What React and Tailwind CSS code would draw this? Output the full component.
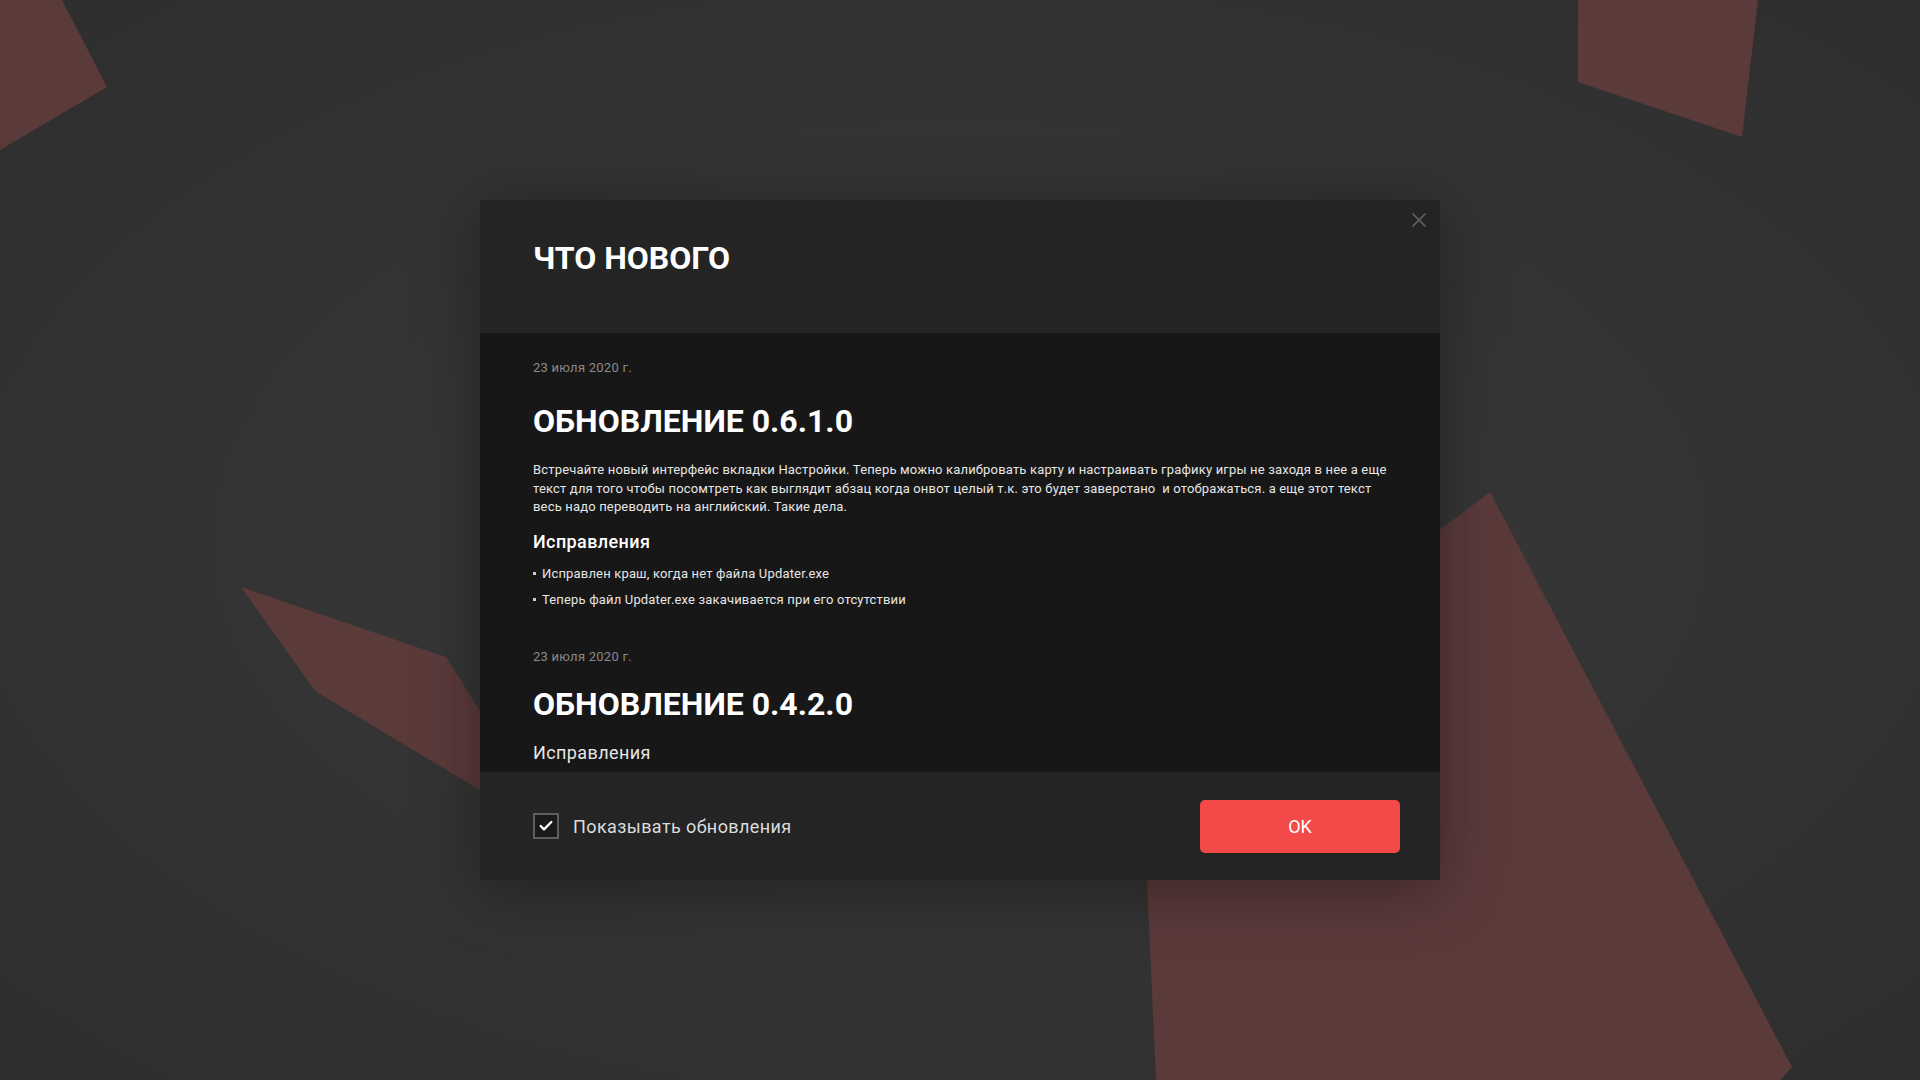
import { useState } from 'react';
import { Check } from 'lucide-react';

const releases = [
  {
    date: '23 июля 2020 г.',
    version: 'ОБНОВЛЕНИЕ 0.6.1.0',
    text: 'Встречайте новый интерфейс вкладки Настройки. Теперь можно калибровать карту и настраивать графику игры не заходя в нее а еще текст для того чтобы посомтреть как выглядит абзац когда онвот целый т.к. это будет заверстано  и отображаться. а еще этот текст весь надо переводить на английский. Такие дела.',
    fixes: [
      'Исправлен краш, когда нет файла Updater.exe',
      'Теперь файл Updater.exe закачивается при его отсутствии',
    ],
  },
  {
    date: '23 июля 2020 г.',
    version: 'ОБНОВЛЕНИЕ 0.4.2.0',
    fixes: [],
  },
];

const Backdrop = () => (
  <svg className="absolute inset-0 h-full w-full" viewBox="0 0 1920 1080" preserveAspectRatio="none">
    <g fill="#5b3a3a">
      <polygon points="0,0 62,0 107,87 0,150" />
      <polygon points="1578,0 1758,0 1742,137 1578,82" />
      <polygon points="241,587 446,657 530,790 530,820 315,691" />
      <polygon points="1490,492 1792,1067 1780,1080 1156,1080 1146,860 1400,560" />
    </g>
  </svg>
);

const App = () => {
  const [showUpdates, setShowUpdates] = useState(true);

  return (
    <div
      className="relative flex h-screen w-screen items-center justify-center overflow-hidden bg-[radial-gradient(ellipse_at_center,#3b3b3b_0%,#333333_55%,#2e2e2e_100%)]"
      style={{ fontFamily: 'Roboto, "Noto Sans", sans-serif' }}
    >
      <Backdrop />

      <div className="relative flex h-[680px] w-[960px] flex-col bg-[#242424] text-white shadow-[0_10px_60px_rgba(0,0,0,0.35)]">
        <button className="absolute right-[14px] top-[13px]">
          <svg width="14" height="14" viewBox="0 0 14 14" stroke="#666666" strokeWidth="1.5" strokeLinecap="round">
            <line x1="1" y1="1" x2="13" y2="13" />
            <line x1="13" y1="1" x2="1" y2="13" />
          </svg>
        </button>

        {/* header */}
        <div className="h-[133px] shrink-0 px-[53px] pt-10">
          <h1 className="text-[32px] font-bold leading-9">ЧТО НОВОГО</h1>
        </div>

        {/* changelog */}
        <div className="h-[439px] shrink-0 overflow-hidden bg-[#171717] px-[53px] pt-[27px]">
          {releases.map((r, i) => (
            <div key={i} className={i > 0 ? 'mt-10' : ''}>
              <p className="text-[13px] leading-4 tracking-[0.25px] text-[#8a8a8a]">{r.date}</p>
              <h2 className={`${i > 0 ? 'mt-[21px]' : 'mt-[27px]'} text-[32px] font-bold leading-9`}>
                {r.version}
              </h2>
              {r.text && (
                <p className="mt-[22px] whitespace-pre-wrap text-[13px] leading-[18.5px] tracking-[0.17px] text-[#e6e6e6]">
                  {r.text}
                </p>
              )}
              {r.fixes.length > 0 ? (
                <>
                  <h3 className="mt-[13px] text-[18px] font-medium leading-6 tracking-[0.4px]">Исправления</h3>
                  <ul className="mt-[11px] flex flex-col gap-2">
                    {r.fixes.map((f) => (
                      <li key={f} className="flex items-center gap-[6px] text-[13px] leading-[18px] tracking-[0.17px] text-[#e6e6e6]">
                        <span className="h-[3px] w-[3px] bg-[#cfcfcf]" />
                        {f}
                      </li>
                    ))}
                  </ul>
                </>
              ) : (
                <h3 className="mt-[19px] text-[18px] leading-6 tracking-[0.4px] text-[#e6e6e6]">Исправления</h3>
              )}
            </div>
          ))}
        </div>

        {/* footer */}
        <div className="flex flex-1 items-center justify-between pl-[53px] pr-10">
          <label className="flex cursor-pointer items-center gap-[14px]">
            <button
              onClick={() => setShowUpdates(!showUpdates)}
              className="flex h-[26px] w-[26px] items-center justify-center border-2 border-[#5e5e5e] bg-[#1a1a1a]"
            >
              {showUpdates && <Check size={16} strokeWidth={3.5} className="text-white" />}
            </button>
            <span className="text-[18px] tracking-[0.4px] text-[#dcdcdc]">Показывать обновления</span>
          </label>
          <button className="h-[53px] w-[200px] rounded-[5px] bg-[#f44949] text-[18px] text-white">
            OK
          </button>
        </div>
      </div>
    </div>
  );
};

export default App;
